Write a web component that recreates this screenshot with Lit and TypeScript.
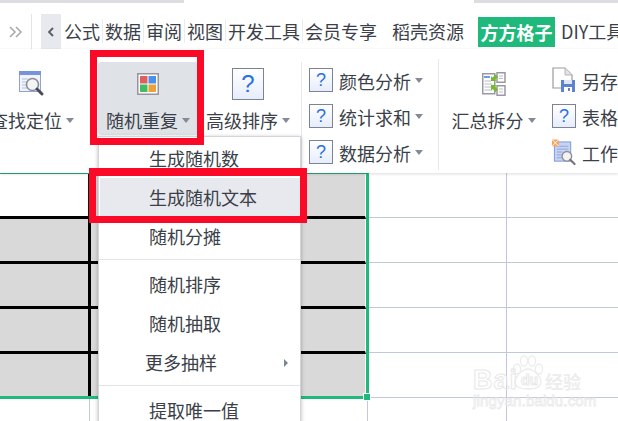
import { LitElement, html, css, svg } from "lit";
import { customElement } from "lit/decorators.js";

const findIcon = html`<svg width="26" height="26" viewBox="0 0 26 26">
  <rect x="0.5" y="0.5" width="21" height="20" fill="#f1f4fc" stroke="#8ea3dc"/>
  <rect x="0" y="0" width="22" height="4" fill="#7693dc"/>
  <path d="M3 8h6M3 11h5M3 14h5M3 17h7" stroke="#b5c0dc" stroke-width="1"/>
  <circle cx="13.5" cy="13.5" r="6" fill="#f4f5f6" stroke="#8d8f94" stroke-width="1.6"/>
  <path d="M18 18l5 5" stroke="#4a4d55" stroke-width="3" stroke-linecap="round"/>
</svg>`;

const randomIcon = html`<svg width="22" height="22" viewBox="0 0 22 22">
  <rect x="0.75" y="0.75" width="20.5" height="20.5" fill="#fff" stroke="#98939f" stroke-width="1.5"/>
  <rect x="3" y="3" width="7.5" height="7.5" fill="#dd5f5e"/>
  <rect x="11.5" y="3" width="7.5" height="7.5" fill="#4b90ea"/>
  <rect x="3" y="11.5" width="7.5" height="7.5" fill="#43bb63"/>
  <rect x="11.5" y="11.5" width="7.5" height="7.5" fill="#eca13b"/>
</svg>`;

const mergeIcon = html`<svg width="24" height="24" viewBox="0 0 24 24">
  <rect x="0.75" y="1.75" width="12" height="20" fill="#fff" stroke="#9a99a3" stroke-width="1.5"/>
  <rect x="2" y="4" width="6" height="2" fill="#6f9be4"/>
  <path d="M2.5 9h7M2.5 12h8M2.5 15h8M2.5 18h8" stroke="#b6bcc8"/>
  <rect x="15" y="0.75" width="8" height="9.5" fill="#fff" stroke="#9a99a3" stroke-width="1.5"/>
  <rect x="15" y="13.75" width="8" height="9.5" fill="#fff" stroke="#9a99a3" stroke-width="1.5"/>
  <path d="M17 4h4M17 6.5h4M17 17h4M17 20h4" stroke="#b6bcc8"/>
  <path d="M9 9l0-5 1.6 1.6 3-3 2.4 2.4-3 3L14.6 9z" fill="#78b92e"/>
  <path d="M9 13l5.6 0-1.6 1.6 3 3-2.4 2.4-3-3L9 18.6z" fill="#78b92e"/>
</svg>`;

const saveIcon = html`<svg width="24" height="26" viewBox="0 0 24 26">
  <path d="M1 1h12l7 7v13H1z" fill="#fff" stroke="#9a99a3" stroke-width="1.2"/>
  <path d="M13 1v7h7" fill="#e4e5ea" stroke="#b5b5bc"/>
  <rect x="9" y="13" width="14" height="12" fill="#5f82cf"/>
  <rect x="12" y="13" width="8" height="4" fill="#dfe6f6"/>
  <rect x="12" y="20" width="8" height="5" fill="#fff"/>
  <rect x="16" y="21" width="2" height="3" fill="#5f82cf"/>
</svg>`;

const sheetIcon = html`<svg width="25" height="27" viewBox="0 0 25 27">
  <rect x="2.5" y="2.5" width="17" height="20" fill="#c6d4f4" stroke="#7f95d6"/>
  <path d="M5 7h12M5 10h12M5 13h6M5 16h5M5 19h6" stroke="#8fa4d8"/>
  <rect x="0" y="0" width="7" height="7" fill="#f3a35a"/>
  <path d="M0 0l7 7M7 0l-7 7" stroke="#fff" stroke-width="1"/>
  <circle cx="15.5" cy="17.5" r="5" fill="#f3f3f4" stroke="#8d8f94" stroke-width="1.4"/>
  <path d="M19 21l4.5 4.5" stroke="#74767c" stroke-width="2.2" stroke-linecap="round"/>
</svg>`;

const paw = svg`<g fill="#fff" stroke="#ececec" stroke-width="1.3">
  <ellipse cx="5" cy="14" rx="3.6" ry="5"/>
  <ellipse cx="12" cy="6" rx="3.6" ry="5"/>
  <ellipse cx="20" cy="6" rx="3.6" ry="5"/>
  <ellipse cx="27" cy="14" rx="3.6" ry="5"/>
  <path d="M16 14c6 0 13 8 13 13 0 6-7 7-13 7s-13-1-13-7c0-5 7-13 13-13z"/>
</g>`;

@customElement("app-root")
export class AppRoot extends LitElement {
  static styles = css`
    :host {
      display: block;
      position: relative;
      width: 618px;
      height: 421px;
      overflow: hidden;
      background: #fff;
      color: #3b3f49;
      font: 18px/24px "Noto Sans CJK SC", "Noto Sans", sans-serif;
    }
    .strip { display: flex; justify-content: space-between; height: 3px; }
    .strip i { background: #dcdee2; }
    .strip i:first-child { width: 184px; }
    .strip i:last-child { width: 144px; }

    .tabs { display: flex; align-items: center; height: 35px; margin-top: 11px; white-space: nowrap; overflow: hidden; }
    .more { flex: none; width: 31px; height: 35px; display: flex; align-items: center; justify-content: center; border-right: 1px solid #e2e3e6; }
    .back { flex: none; width: 20px; height: 35px; margin-left: 9px; margin-right: 1px; background: #e7e9ee; display: flex; align-items: center; justify-content: center; }
    .tab { flex: none; padding: 0 2px; border-right: 1px solid #e9edf2; position: relative; top: -1px; }
    .tab.plain { border-right: 0; }
    .tab.wide { margin-right: 11px; }
    .tab.brand { width: 77px; height: 30px; line-height: 30px; text-align: center; padding: 0; margin: 0 4px 0 12px; background: #1fba7b; color: #fff; font-weight: 700; border: 0; top: 0; }

    .ribbon { position: relative; z-index: 1; display: flex; height: 124px; background: #fff; box-shadow: 0 1px 3px rgba(0,0,0,.14); }
    .big { width: 100px; height: 73px; margin-top: 13px; border-radius: 3px; display: flex; flex-direction: column; align-items: center; flex: none; }
    .big.first { margin-left: -18px; margin-right: 16px; }
    .big.on { background: #dfe2e6; }
    .big.last { width: 109px; }
    .slot { height: 44px; display: flex; align-items: center; justify-content: center; }
    .label { display: flex; align-items: center; height: 28px; white-space: nowrap; }
    .caret { width: 0; height: 0; margin-left: 4px; border: 4px solid transparent; border-top: 5px solid #858a98; border-bottom: 0; }
    .rule { width: 1px; background: #e8e9ec; flex: none; }
    .rule.a { margin: 13px 0 0 3px; }
    .rule.b { margin: 10px 0 3px 0; }
    .stack { display: flex; flex-direction: column; gap: 12px; padding: 19px 0 0 7px; flex: none; }
    .stack.a { width: 129px; }
    .stack.b { padding-left: 4px; }
    .row { display: flex; align-items: center; height: 24px; white-space: nowrap; }
    .row .tx { margin-top: 2px; }
    .row .ic { width: 24px; height: 24px; margin-right: 6px; display: flex; align-items: center; justify-content: center; }
    .help { box-sizing: border-box; display: flex; align-items: center; justify-content: center; border: 1px solid #7d8295; background: linear-gradient(#fff, #e6edfb); color: #2b6fe4; font-family: "Liberation Sans", sans-serif; }
    .help.s { width: 24px; height: 24px; font-size: 18px; }
    .help.l { width: 32px; height: 32px; font-size: 24px; }

    .sheet { display: flex; height: 248px; }
    .left { position: relative; width: 369px; flex: none; }
    .sel { height: 226px; box-sizing: border-box; border-top: 1px solid #1fa878; border-right: 3px solid #1fba7b; border-bottom: 3px solid #1fba7b; display: flex; flex-direction: column; }
    .line { display: flex; height: 45px; flex: none; box-sizing: border-box; border-bottom: 3px solid #000; background: #d9d9d9; border-right: 1px solid #fff; }
    .line:last-child { flex: 1; border-bottom: 0; }
    .line span:first-child { width: 88px; border-right: 3px solid #000; }
    .line .blank { background: #fff; }
    .under { display: flex; height: 22px; }
    .under b { width: 89px; border-right: 1px solid #c2c8dc; }
    .under b:last-child { width: 277px; }
    .right { flex: 1; display: flex; flex-direction: column; }
    .rrow { display: flex; flex: none; height: 45px; box-sizing: border-box; border-bottom: 1px solid #c2c8dc; }
    .rrow:last-child { height: 23px; border-bottom: 0; }
    .rrow span { width: 138px; box-sizing: border-box; border-right: 1px solid #c2c8dc; }
    .handle { position: absolute; left: 364px; top: 221px; width: 6px; height: 6px; background: #1fba7b; outline: 1px solid #fff; }

    .menu { position: absolute; z-index: 2; left: 98px; top: 136px; width: 203px; height: 300px; box-sizing: border-box; background: #fff; border: 1px solid #d4d5d8; box-shadow: 0 1px 4px rgba(0,0,0,.28); padding-top: 2px; }
    .item { display: flex; align-items: center; height: 39px; padding-left: 50px; }
    .item .tx { margin-top: -2px; }
    .item.hot { background: #e7e9ee; margin-left: 1px; padding-left: 49px; }
    .item.sub { padding-left: 46px; padding-right: 12px; }
    .item.sub i { margin-left: auto; width: 0; height: 0; border: 4px solid transparent; border-left: 4px solid #7d8398; border-right: 0; }
    .sep { height: 9px; padding-top: 3px; box-sizing: border-box; }
    .sep::before { content: ""; display: block; height: 1px; background: #e3e4e7; }

    .mark { position: absolute; z-index: 3; box-sizing: border-box; border: 7px solid #fa0a26; pointer-events: none; }
    .mark.one { left: 90px; top: 50px; width: 114px; height: 95px; }
    .mark.two { left: 89px; top: 168px; width: 218px; height: 55px; border-top-width: 8px; }

    .wm { position: absolute; z-index: 1; left: 473px; top: 355px; width: 112px; height: 52px; color: transparent; -webkit-text-stroke: 1px #e8e8e8; font-family: "Liberation Sans", sans-serif; }
    .wm span { position: absolute; white-space: nowrap; }
    .wm svg { position: absolute; left: 39px; top: 0; }
    .wm .bai { left: 0; top: 12px; font-size: 27px; line-height: 27px; font-weight: 700; letter-spacing: 1px; }
    .wm .du { left: 48px; top: 17px; font-size: 14px; line-height: 16px; font-weight: 700; }
    .wm .jy { left: 72px; top: 14px; font: 700 18px/24px "Noto Sans CJK SC", sans-serif; color: #ededed; -webkit-text-stroke: 0; }
    .wm .url { left: 0; top: 38px; font-size: 15px; line-height: 15px; letter-spacing: .15px; -webkit-text-stroke: .8px #eaeaea; }
  `;

  private rows = ["颜色分析", "统计求和", "数据分析"];

  render() {
    return html`
      <div class="strip"><i></i><i></i></div>
      <div class="tabs">
        <div class="more"><svg width="14" height="12" viewBox="0 0 14 12"><path d="M1 1l5 5-5 5M7 1l5 5-5 5" fill="none" stroke="#a9abb0" stroke-width="1.6"/></svg></div>
        <div class="back"><svg width="6" height="10" viewBox="0 0 6 10"><path d="M5 1L1 5l4 4" fill="none" stroke="#555a68" stroke-width="1.8"/></svg></div>
        ${["公式", "数据", "审阅", "视图", "开发工具"].map((t) => html`<span class="tab">${t}</span>`)}
        <span class="tab plain wide">会员专享</span>
        <span class="tab plain">稻壳资源</span>
        <span class="tab brand">方方格子</span>
        <span class="tab plain">DIY工具</span>
      </div>
      <div class="ribbon">
        <div class="big first"><div class="slot">${findIcon}</div><div class="label">查找定位<i class="caret"></i></div></div>
        <div class="big on"><div class="slot">${randomIcon}</div><div class="label">随机重复<i class="caret"></i></div></div>
        <div class="big"><div class="slot"><span class="help l">?</span></div><div class="label">高级排序<i class="caret"></i></div></div>
        <div class="rule a"></div>
        <div class="stack a">
          ${this.rows.map((t) => html`<div class="row"><span class="ic"><span class="help s">?</span></span><span class="tx">${t}</span><i class="caret"></i></div>`)}
        </div>
        <div class="rule b"></div>
        <div class="big last"><div class="slot">${mergeIcon}</div><div class="label">汇总拆分<i class="caret"></i></div></div>
        <div class="stack b">
          <div class="row"><span class="ic">${saveIcon}</span><span class="tx">另存为</span></div>
          <div class="row"><span class="ic"><span class="help s">?</span></span><span class="tx">表格操作</span></div>
          <div class="row"><span class="ic">${sheetIcon}</span><span class="tx">工作表</span></div>
        </div>
      </div>
      <div class="sheet">
        <div class="left">
          <div class="sel">
            <div class="line"><span class="blank"></span><span></span></div>
            ${[0, 1, 2, 3].map(() => html`<div class="line"><span></span><span></span></div>`)}
          </div>
          <div class="under"><b></b><b></b></div>
          <div class="handle"></div>
        </div>
        <div class="right">
          ${[0, 1, 2, 3, 4, 5].map(() => html`<div class="rrow"><span></span></div>`)}
        </div>
      </div>
      <div class="menu">
        <div class="item"><span class="tx">生成随机数</span></div>
        <div class="item hot"><span class="tx">生成随机文本</span></div>
        <div class="item"><span class="tx">随机分摊</span></div>
        <div class="sep"></div>
        <div class="item"><span class="tx">随机排序</span></div>
        <div class="item"><span class="tx">随机抽取</span></div>
        <div class="item sub"><span class="tx">更多抽样</span><i></i></div>
        <div class="sep"></div>
        <div class="item"><span class="tx">提取唯一值</span></div>
      </div>
      <div class="mark one"></div>
      <div class="mark two"></div>
      <div class="wm">
        <svg width="32" height="36" viewBox="0 0 32 36">${paw}</svg>
        <span class="bai">Bai</span><span class="du">du</span><span class="jy">经验</span>
        <span class="url">jingyan.baidu.com</span>
      </div>
    `;
  }
}
